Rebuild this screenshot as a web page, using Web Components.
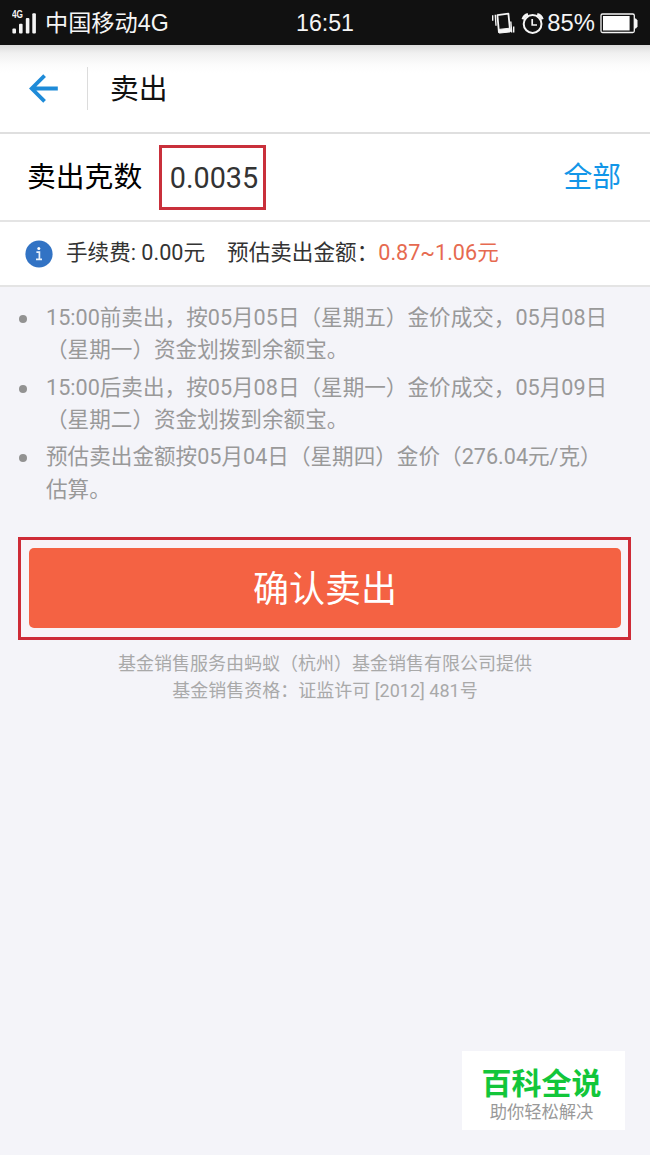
<!DOCTYPE html>
<html lang="zh-CN">
<head>
<meta charset="utf-8">
<meta name="viewport" content="width=device-width">
<title>卖出</title>
<style>
  html, body { margin: 0; padding: 0; }
  body {
    height: 1155px;
    overflow: hidden;
    background: #f4f4f9;
    font-family: Roboto, "Noto Sans CJK SC", sans-serif;
  }
</style>
</head>
<body>
<sell-page></sell-page>

<script>
class BaseElement extends HTMLElement {
  constructor() {
    super();
    const shadowRoot = this.attachShadow({ mode: 'open' });
    shadowRoot.innerHTML = `<style>:host { display: block; box-sizing: border-box; } ${this.styles()}</style>${this.markup()}`;
  }
  styles() { return ''; }
  markup() { return '<slot></slot>'; }
}

class StatusBar extends BaseElement {
  styles() {
    return `
      :host {
        display: grid;
        grid-template-columns: 1fr auto 1fr;
        align-items: center;
        height: 45px;
        padding: 0 12px;
        background: #111;
        color: #f5f5f5;
        font: 23.2px/46px "Liberation Sans", "Noto Sans CJK SC", sans-serif;
        white-space: nowrap;
      }
      div { display: flex; align-items: center; height: 45px; }
      svg { display: block; flex: none; }
      .right { justify-content: flex-end; }
      .signal { margin-right: 9px; }
      .alarm { margin: 0 3px 0 6px; }
      .power { font-size: 23.8px; }
      .battery { margin-left: 5px; }
    `;
  }
  markup() {
    return `
      <div class="left">
        <svg class="signal" width="24" height="45" viewBox="0 0 24 45" fill="#f5f5f5">
          <text x="0" y="17.4" font-size="10" font-weight="700" textLength="11" lengthAdjust="spacingAndGlyphs">4G</text>
          <rect x="0.4" y="27.4" width="3.6" height="5" rx="1"/>
          <rect x="7" y="22.8" width="3.6" height="9.6" rx="1"/>
          <rect x="13.8" y="17" width="3.6" height="15.4" rx="1"/>
          <rect x="20.3" y="12.2" width="3.6" height="20.2" rx="1"/>
        </svg>
        <slot name="carrier"></slot>
      </div>
      <slot name="time"></slot>
      <div class="right">
        <svg width="24" height="45" viewBox="491 0 24 45" fill="none" stroke="#f5f5f5">
          <path d="M492.7 14.3v5.4M495.3 13.8l.7 11M510.8 20.5l.9 11M513.7 25.5v6" stroke-width="1.4"/>
          <path d="M497.4 14.2l11-1.6 1.7 17.3-11.2 1.2z" stroke-width="1.8" stroke-linejoin="round"/>
          <path d="M498.8 28.4l11-1.2.4 3.7-11 1.2z" fill="#f5f5f5" stroke-width="1"/>
        </svg>
        <svg class="alarm" width="23" height="45" viewBox="521 0 23 45" fill="none" stroke="#f5f5f5">
          <circle cx="532.6" cy="23" r="8.9" stroke-width="2"/>
          <path d="M532.2 18v6h4.8" stroke-width="1.7"/>
          <path d="M522.9 18.3q1.2-4 5.1-5M542.3 18.3q-1.2-4-5.1-5" stroke-width="2.8"/>
        </svg>
        <span class="power"><slot name="power"></slot></span>
        <svg class="battery" width="38" height="45" viewBox="600 0 38 45">
          <rect x="601" y="13" width="33.3" height="18.5" rx="1.5" fill="none" stroke="#f5f5f5" stroke-width="1.3"/>
          <rect x="603" y="15" width="26.6" height="14.5" fill="#fff"/>
          <path d="M634.5 17.5h1.5l1.5 2v6l-1.5 2h-1.5z" fill="#f5f5f5"/>
        </svg>
      </div>
    `;
  }
}
customElements.define('status-bar', StatusBar);

class TitleBar extends BaseElement {
  styles() {
    return `
      :host {
        display: flex;
        align-items: center;
        height: 89px;
        padding-left: 29px;
        border-bottom: 2px solid #dfdfdf;
        background: linear-gradient(#dcdcdc, #f0f0f0 8px, #fcfcfc 20px, #fff 28px);
        color: #111;
        font-size: 28.8px;
        line-height: 40px;
      }
      svg { display: block; }
      i { width: 1px; height: 43px; margin: 0 22px 0 28px; background: #dcdcdc; }
    `;
  }
  markup() {
    return `
      <svg width="30" height="30" viewBox="0 0 30 30" fill="none" stroke="#1e8bd8" stroke-width="3.8">
        <path d="M28.8 14.5H3M15.6 1.6L2.7 14.5l12.9 12.9"/>
      </svg>
      <i></i>
      <slot></slot>
    `;
  }
}
customElements.define('title-bar', TitleBar);

class AmountRow extends BaseElement {
  styles() {
    return `
      :host {
        display: flex;
        align-items: center;
        height: 88px;
        padding: 0 29px 0 27px;
        border-bottom: 2px solid #e4e4e4;
        background: #fff;
        color: #000;
        font-size: 28.8px;
        line-height: 40px;
      }
      .value {
        box-sizing: border-box;
        width: 107px;
        height: 65px;
        margin: 1px auto 0 17px;
        padding-left: 7.5px;
        border: 3px solid #c9303b;
        color: #333;
        line-height: 61px;
      }
      .all { color: #1296e8; }
    `;
  }
  markup() {
    return `
      <slot name="label"></slot>
      <div class="value"><slot></slot></div>
      <span class="all"><slot name="action"></slot></span>
    `;
  }
}
customElements.define('amount-row', AmountRow);

class FeeRow extends BaseElement {
  styles() {
    return `
      :host {
        display: flex;
        align-items: center;
        height: 65px;
        padding: 0 0 2px 25px;
        border-bottom: 2px solid #e4e4e4;
        background: #fff;
        color: #333;
        font-size: 21.6px;
        line-height: 32px;
        white-space: nowrap;
      }
      svg { display: block; margin: 2px 13px 0 0; }
      .fee { margin-right: 22px; }
      .range { color: #e66a50; }
    `;
  }
  markup() {
    return `
      <svg width="28" height="28" viewBox="0 0 28 28">
        <circle cx="14" cy="14" r="13.6" fill="#3273c4"/>
        <circle cx="13.8" cy="8.6" r="1.5" fill="#fff"/>
        <path d="M11.4 12.2h3v7.2M11 19.4h6" fill="none" stroke="#e8f1fb" stroke-width="1.7"/>
      </svg>
      <span class="fee"><slot name="fee"></slot></span>
      <slot></slot>
      <span class="range"><slot name="range"></slot></span>
    `;
  }
}
customElements.define('fee-row', FeeRow);

class NoteItem extends BaseElement {
  styles() {
    return `
      :host {
        display: flex;
        padding-left: 19px;
        color: #999;
        font-size: 21.6px;
        line-height: 32.4px;
        white-space: nowrap;
      }
      i { flex: none; width: 8px; height: 8px; margin: 13px 19px 0 0; border-radius: 50%; background: #929292; }
    `;
  }
  markup() {
    return '<i></i><div><slot></slot></div>';
  }
}
customElements.define('note-item', NoteItem);

class ConfirmButton extends BaseElement {
  styles() {
    return `
      :host {
        margin: 0 19px 0 18px;
        padding: 8px 7px 9px 8px;
        border: 3px solid #ce2b37;
        background: #f8f3f7;
      }
      button {
        display: block;
        width: 100%;
        height: 80px;
        padding: 4px 0 0;
        border: 0;
        border-radius: 5px;
        background: #f46243;
        color: #fff;
        font: inherit;
        font-size: 36px;
        line-height: 76px;
      }
    `;
  }
  markup() {
    return '<button><slot></slot></button>';
  }
}
customElements.define('confirm-button', ConfirmButton);

class LegalText extends BaseElement {
  styles() {
    return `
      :host {
        margin-top: 10px;
        color: #a9a9a9;
        font-size: 18px;
        line-height: 27px;
        text-align: center;
      }
    `;
  }
}
customElements.define('legal-text', LegalText);

class SiteBadge extends BaseElement {
  styles() {
    return `
      :host {
        position: absolute;
        left: 462px;
        top: 1051px;
        width: 163px;
        height: 79px;
        padding-top: 15px;
        background: #fff;
        color: #999;
        font-size: 17.3px;
        line-height: 20px;
        text-align: center;
        white-space: nowrap;
      }
      b { display: block; padding-right: 4px; color: #12c63a; font-size: 30px; font-weight: 700; line-height: 36px; }
      div { padding-right: 4px; }
    `;
  }
  markup() {
    return '<b><slot name="name"></slot></b><div><slot></slot></div>';
  }
}
customElements.define('site-badge', SiteBadge);

class SellPage extends BaseElement {
  styles() {
    return `
      :host { width: 650px; }
      .notes { display: flex; flex-direction: column; box-sizing: border-box; gap: 4.8px; height: 250px; padding-top: 15px; }
    `;
  }
  markup() {
    return `
      <status-bar>
        <span slot="carrier">中国移动4G</span>
        <span slot="time">16:51</span>
        <span slot="power">85%</span>
      </status-bar>
      <title-bar>卖出</title-bar>
      <amount-row>
        <span slot="label">卖出克数</span>0.0035<span slot="action">全部</span>
      </amount-row>
      <fee-row>
        <span slot="fee">手续费: 0.00元</span>
        <span>预估卖出金额：</span>
        <span slot="range">0.87~1.06元</span>
      </fee-row>
      <div class="notes">
        <note-item>15:00前卖出，按05月05日（星期五）金价成交，05月08日<br>（星期一）资金划拨到余额宝。</note-item>
        <note-item>15:00后卖出，按05月08日（星期一）金价成交，05月09日<br>（星期二）资金划拨到余额宝。</note-item>
        <note-item>预估卖出金额按05月04日（星期四）金价（276.04元/克）<br>估算。</note-item>
      </div>
      <confirm-button>确认卖出</confirm-button>
      <legal-text>基金销售服务由蚂蚁（杭州）基金销售有限公司提供<br>基金销售资格：证监许可 [2012] 481号</legal-text>
      <site-badge><span slot="name">百科全说</span>助你轻松解决</site-badge>
    `;
  }
}
customElements.define('sell-page', SellPage);
</script>
</body>
</html>
